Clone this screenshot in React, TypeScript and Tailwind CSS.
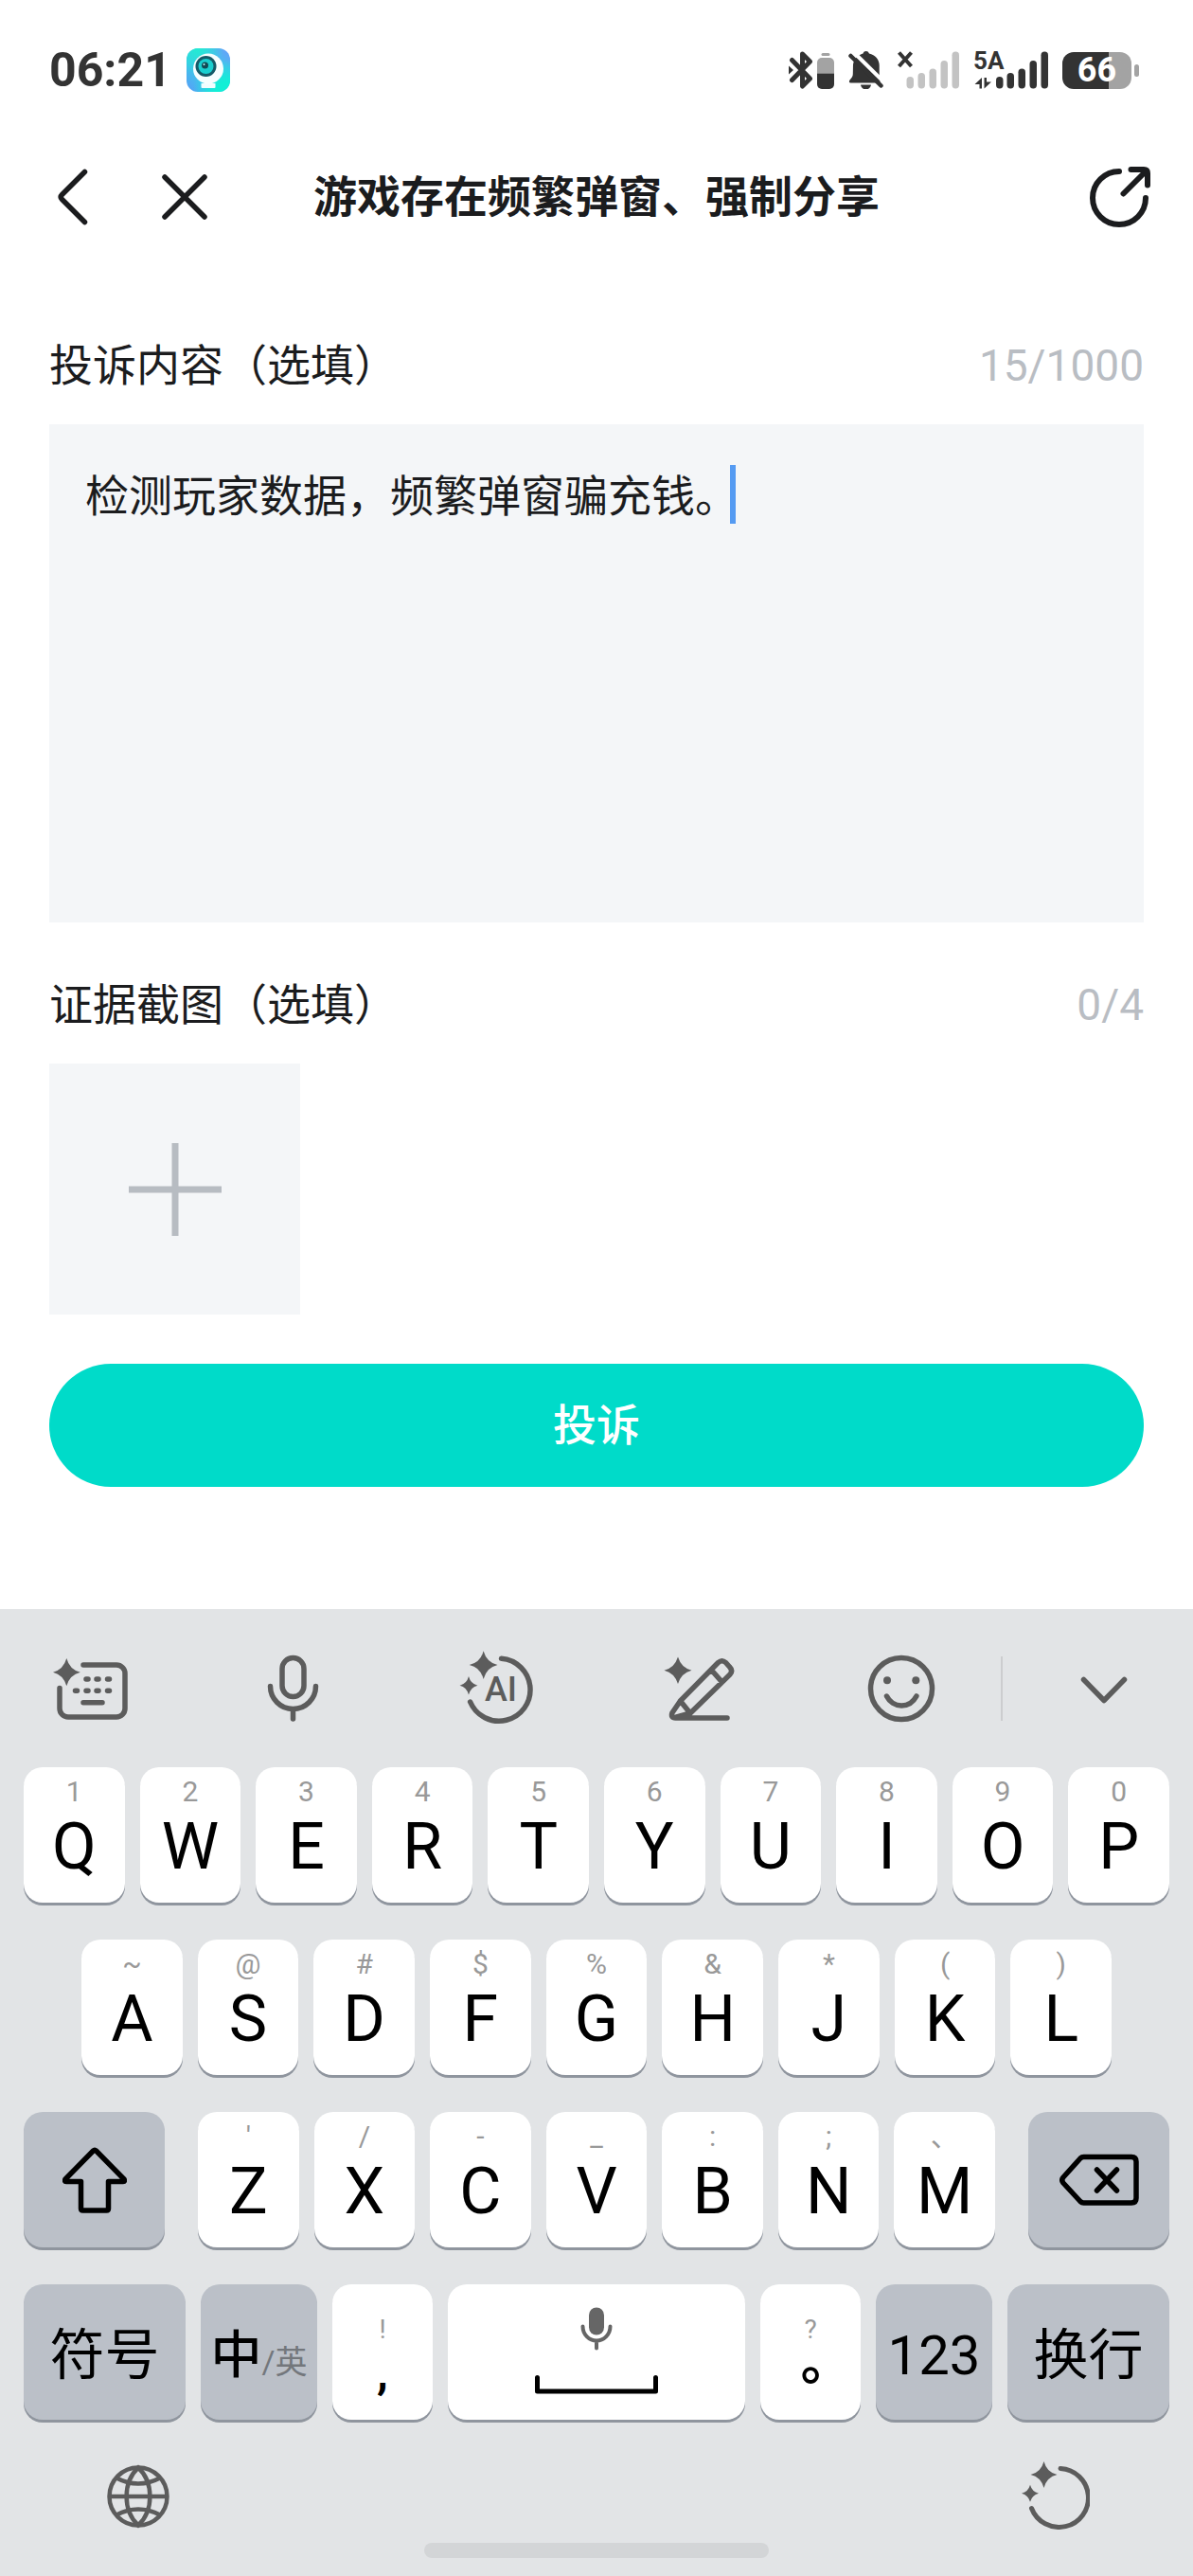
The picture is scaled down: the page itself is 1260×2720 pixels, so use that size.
import React, { useState } from "react";

interface KeyProps {
  label: string;
  hint?: string;
}

interface IconButtonProps {
  title: string;
  children: React.ReactNode;
}

const ROW_ONE: KeyProps[] = [
  { label: "Q", hint: "1" },
  { label: "W", hint: "2" },
  { label: "E", hint: "3" },
  { label: "R", hint: "4" },
  { label: "T", hint: "5" },
  { label: "Y", hint: "6" },
  { label: "U", hint: "7" },
  { label: "I", hint: "8" },
  { label: "O", hint: "9" },
  { label: "P", hint: "0" },
];

const ROW_TWO: KeyProps[] = [
  { label: "A", hint: "~" },
  { label: "S", hint: "@" },
  { label: "D", hint: "#" },
  { label: "F", hint: "$" },
  { label: "G", hint: "%" },
  { label: "H", hint: "&" },
  { label: "J", hint: "*" },
  { label: "K", hint: "(" },
  { label: "L", hint: ")" },
];

const ROW_THREE: KeyProps[] = [
  { label: "Z", hint: "'" },
  { label: "X", hint: "/" },
  { label: "C", hint: "-" },
  { label: "V", hint: "_" },
  { label: "B", hint: ":" },
  { label: "N", hint: ";" },
  { label: "M", hint: "、" },
];

const StatusBar: React.FC = () => {
  return (
    <div className="flex h-[148px] items-center justify-between pl-[52px] pr-[57px] text-[#333]">
      <div className="flex items-center gap-4">
        <span className="text-[50px] font-bold leading-none">06:21</span>
        <svg width="46" height="46" viewBox="0 0 46 46">
          <defs>
            <linearGradient id="cam" x1="0" y1="1" x2="1" y2="0">
              <stop offset="0" stopColor="#5a9cf8" />
              <stop offset="0.35" stopColor="#3fc4ea" />
              <stop offset="0.6" stopColor="#3fc8ea" />
              <stop offset="1" stopColor="#6a9cfb" />
            </linearGradient>
            <radialGradient id="camTop" cx="0.25" cy="0" r="0.6">
              <stop offset="0" stopColor="#22ecd2" />
              <stop offset="1" stopColor="#22ecd2" stopOpacity="0" />
            </radialGradient>
            <radialGradient id="camBottom" cx="0.9" cy="1" r="0.75">
              <stop offset="0.3" stopColor="#12efd6" />
              <stop offset="1" stopColor="#12efd6" stopOpacity="0" />
            </radialGradient>
          </defs>
          <rect width="46" height="46" rx="12" fill="url(#cam)" />
          <rect width="46" height="46" rx="12" fill="url(#camTop)" />
          <rect width="46" height="46" rx="12" fill="url(#camBottom)" />
          <path d="M15.5 37h15v4a1 1 0 0 1-1 1h-13a1 1 0 0 1-1-1z" fill="#f2fdff" />
          <circle cx="23" cy="21.5" r="16" fill="#f7feff" />
          <circle cx="20.5" cy="19" r="11" fill="#155a68" />
          <circle cx="20.5" cy="19" r="8" fill="#19cfd0" />
          <circle cx="19.5" cy="18" r="3.5" fill="#124955" />
          <circle cx="18.5" cy="17" r="1" fill="#bff" />
        </svg>
      </div>

      <div className="flex items-center gap-[15px]">
        {/* bluetooth with headset battery */}
        <svg width="48" height="40" viewBox="0 0 48 40">
          <path
            d="M3.5 9.5 22.5 29 14.5 37V3L22.5 11 3.5 30.5"
            fill="none"
            stroke="#333"
            strokeWidth="5"
            strokeLinecap="round"
            strokeLinejoin="round"
          />
          <path d="M0 15.5 5 20 0 24.5z" fill="#333" />
          <rect x="34.5" y="2" width="9" height="3" rx="1.5" fill="#a3a3a3" />
          <path d="M30 23.5V12a5 5 0 0 1 5-5h8a5 5 0 0 1 5 5v11.5z" fill="#a3a3a3" />
          <path d="M30 23.5V35a5 5 0 0 0 5 5h8a5 5 0 0 0 5-5V23.5z" fill="#333" />
        </svg>
        {/* muted bell */}
        <svg width="37" height="40" viewBox="0 0 37 40">
          <path
            d="M5 14C6 8.500 10 4 15.500 2.500 16 .8 17.300 0 18.700 0s2.700.8 3.200 2.500C28.500 4 32.700 9 32.700 15v12l3 6.500H2.500c-1.800 0-2-1.800-1-3C3.800 28 4.800 26.500 4.800 24z"
            fill="#333"
          />
          <path d="M0 0h11L6 6l-3 6H0zM33.500 24h3.500v11h-3.500z" fill="#fff" />
          <path d="M13 35.500h11c-.5 3-2.700 5-5.500 5s-5-2-5.500-5z" fill="#333" />
          <path d="M7.500 3 38 33" stroke="#fff" strokeWidth="4" />
          <path d="M2.500 5 34.500 36.500" stroke="#333" strokeWidth="4.500" strokeLinecap="round" />
        </svg>
        {/* no service */}
        <svg width="65" height="40" viewBox="0 0 65 40">
          <path d="M1.500 1.500 14.500 16M14.500 1.500 1.500 16" stroke="#333" strokeWidth="4" />
          <g fill="#c3c3c3">
            <rect x="9.500" y="27" width="7.500" height="12.500" rx="3.700" />
            <rect x="21.500" y="23" width="7.500" height="16.500" rx="3.700" />
            <rect x="33.500" y="18.500" width="7.500" height="21" rx="3.700" />
            <rect x="45.500" y="10" width="7.500" height="29.500" rx="3.700" />
            <rect x="57.500" y="0.500" width="7.500" height="39" rx="3.700" />
          </g>
        </svg>
        <svg width="79" height="56" viewBox="0 -8 79 56">
          <text x="0" y="19" fontSize="26" fontWeight="700" fill="#333">
            5A
          </text>
          <g fill="#333">
            <path d="M1.500 35 9 28v11.500H6.500V35z" />
            <path d="M11.500 28H14v4.500h5L11.500 39.500z" />
            <rect x="24" y="27" width="7.500" height="12.500" rx="3.700" />
            <rect x="35.500" y="23" width="7.500" height="16.500" rx="3.700" />
            <rect x="47.500" y="18.500" width="7.500" height="21" rx="3.700" />
            <rect x="59.500" y="10" width="7.500" height="29.500" rx="3.700" />
            <rect x="71.500" y="0.500" width="7.500" height="39" rx="3.700" />
          </g>
        </svg>
        <div className="flex items-center gap-[3px]">
          <div className="flex h-[39px] w-[73px] items-center justify-center rounded-xl bg-linear-to-r from-[#333] from-67% to-[#a3a3a3] to-67% text-[36px] font-bold leading-none text-white">
            66
          </div>
          <div className="h-[13px] w-[5px] rounded-sm bg-[#a3a3a3]" />
        </div>
      </div>
    </div>
  );
};

const NavBar: React.FC = () => {
  return (
    <header className="grid h-[120px] grid-cols-[1fr_auto_1fr] items-center px-[45px] text-[#1b1c1e]">
      <div className="flex items-center gap-[78px] pl-4">
        <button type="button" aria-label="返回">
          <svg width="32" height="60" viewBox="0 0 32 60" fill="none" stroke="currentColor" strokeWidth="5.500" strokeLinecap="round" strokeLinejoin="round">
            <path d="M28.500 3.500 4.500 27.500q-2.500 2.500 0 5l24 24" />
          </svg>
        </button>
        <button type="button" aria-label="关闭">
          <svg width="48" height="48" viewBox="0 0 48 48" fill="none" stroke="currentColor" strokeWidth="5.500" strokeLinecap="round">
            <path d="M3 3 45 45M45 3 3 45" />
          </svg>
        </button>
      </div>
      <h1 className="text-[46px] font-bold leading-[60px]">游戏存在频繁弹窗、强制分享</h1>
      <div className="flex justify-end">
        <button type="button" aria-label="分享">
          <svg width="64" height="64" viewBox="0 0 64 64" fill="none" stroke="currentColor" strokeWidth="6" strokeLinecap="round" strokeLinejoin="round">
            <path d="M31 5A28 28 0 1 0 59 33" />
            <path d="M43.500 3H57q4 0 4 4V19.500M60 4 35.500 28.500" />
          </svg>
        </button>
      </div>
    </header>
  );
};

const ComplaintForm: React.FC = () => {
  const [content, setContent] = useState<string>("检测玩家数据，频繁弹窗骗充钱。");

  return (
    <form className="flex-1 px-[52px] pb-16 pt-[88px] text-[46px] leading-[60px] text-[#1b1c1e]" onSubmit={(e) => e.preventDefault()}>
      <div className="flex justify-between">
        <label htmlFor="content">投诉内容（选填）</label>
        <span className="text-[#b9bdc3]">{content.length}/1000</span>
      </div>
      <div className="relative mt-8">
        <textarea
          id="content"
          maxLength={1000}
          value={content}
          onChange={(e) => setContent(e.target.value)}
          className="block h-[526px] w-full resize-none bg-[#f4f6f8] px-[38px] pt-[46px] caret-[#559bf2] outline-none"
        />
        <span className="pointer-events-none absolute left-[719px] top-[43px] h-[62px] w-[6px] bg-[#559bf2]" />
      </div>

      <div className="mt-[57px] flex justify-between">
        <span>证据截图（选填）</span>
        <span className="text-[#b9bdc3]">0/4</span>
      </div>
      <button type="button" aria-label="添加截图" className="mt-8 flex size-[265px] items-center justify-center bg-[#f4f6f8]">
        <svg width="98" height="98" viewBox="0 0 98 98" stroke="#b7bcc2" strokeWidth="7">
          <path d="M49 0v98M0 49h98" />
        </svg>
      </button>

      <button type="submit" className="mt-[52px] h-[130px] w-full rounded-full bg-[#00dbc9] font-medium text-white">
        投诉
      </button>
    </form>
  );
};

const IconButton: React.FC<IconButtonProps> = ({ title, children }) => {
  return (
    <button type="button" aria-label={title}>
      <svg width="80" height="80" viewBox="0 0 80 80" fill="none" stroke="#5c5c5c" strokeWidth="5.500" strokeLinecap="round" strokeLinejoin="round">
        {children}
      </svg>
    </button>
  );
};

const Toolbar: React.FC = () => {
  return (
    <div className="flex items-center pl-[31px] pr-[29px]">
      <div className="flex flex-1 justify-between">
        <IconButton title="智能键盘">
          <path d="M14.300 8Q17.500 20 28.800 22.700 17.500 25.500 14.300 37.300 11 25.500-.2 22.700 11 20 14.300 8z" fill="#5c5c5c" stroke="none" />
          <path d="M32 15H67a9 9 0 0 1 9 9V61a9 9 0 0 1-9 9H16a9 9 0 0 1-9-9V39.500" />
          <path d="M35 30h2M46 30h2M57.500 30h2M23.500 42.300h2M35 42.300h2M46 42.300h2M57.500 42.300h2M32 54.700H52" />
        </IconButton>
        <IconButton title="语音">
          <rect x="28" y="7.500" width="23" height="41" rx="11.500" />
          <path d="M15.500 37.500A24 24 0 0 0 63.500 37.500M39.500 61.500V72" />
        </IconButton>
        <IconButton title="AI">
          <path d="M26.600.3Q30 12.500 41.500 15 30 17.500 26.600 30 23.500 17.500 11.700 15 23.500 12.500 26.600.3z" fill="#5c5c5c" stroke="none" />
          <path d="M11 27Q13 35 20.500 36.700 13 38.500 11 46.500 9 38.500 1.500 36.700 9 35 11 27z" fill="#5c5c5c" stroke="none" />
          <path d="M45.500 8.300A33 33 0 1 1 12.600 54" />
          <text x="28" y="53" fontSize="36" fontWeight="500" fill="#5c5c5c" stroke="none">
            AI
          </text>
        </IconButton>
        <IconButton title="帮写">
          <path d="M18 6.500Q21.500 18 32.500 20.700 21.500 23.500 18 35 14.500 23.500 3.500 20.700 14.500 18 18 6.500z" fill="#5c5c5c" stroke="none" />
          <path d="M20.500 53 60.500 12.500q4-3.500 8 0l4 4.500q4 4 .500 8L31 66 15 70.500M20.500 53 31 66M53.500 20.500 64 32.500M20.500 53 12 65.500q-2 5.500 3.500 5.500H70" />
        </IconButton>
        <IconButton title="表情">
          <circle cx="40" cy="40" r="32.500" />
          <circle cx="25" cy="31.300" r="4" fill="#5c5c5c" stroke="none" />
          <circle cx="55.300" cy="31.300" r="4" fill="#5c5c5c" stroke="none" />
          <path d="M24.500 48c3 6 9 10 15.700 10s12.500-4 15.700-10" />
        </IconButton>
      </div>
      <div className="ml-[65px] mr-[67px] h-[68px] w-[2px] bg-[#cccdcf]" />
      <IconButton title="收起">
        <path d="M18.500 30.500 40 52.500 61.500 30.500" />
      </IconButton>
    </div>
  );
};

const LetterKey: React.FC<KeyProps> = ({ label, hint }) => {
  return (
    <button type="button" className="flex h-[143px] flex-1 flex-col items-center rounded-[20px] bg-white pt-2 shadow-[0_3px_0_#8f959e]">
      <span className="text-[30px] leading-9 text-[#999]">{hint}</span>
      <span className="text-[68px] leading-[80px] text-black">{label}</span>
    </button>
  );
};

const Keyboard: React.FC = () => {
  return (
    <section className="bg-[#e2e4e6] px-[25px] pt-11 pb-[19px] text-black">
      <Toolbar />

      <div className="mt-[43px] flex flex-col gap-[39px]">
        <div className="flex gap-4">
          {ROW_ONE.map((key) => (
            <LetterKey key={key.label} {...key} />
          ))}
        </div>
        <div className="flex gap-4 px-[61px]">
          {ROW_TWO.map((key) => (
            <LetterKey key={key.label} {...key} />
          ))}
        </div>
        <div className="flex gap-[35px]">
          <button type="button" aria-label="大写" className="flex h-[143px] w-[149px] items-center justify-center rounded-[20px] bg-[#bbc0c8] shadow-[0_3px_0_#8f959e]">
            <svg width="68" height="70" viewBox="0 0 68 70" fill="none" stroke="currentColor" strokeWidth="5.500" strokeLinejoin="round">
              <path d="M32.500 4q1.500-1.500 3 0L65 34q1.500 2.500-1 2.500H48.500V65q0 2-2 2h-25q-2 0-2-2V36.500H4Q1.500 36.500 3 34z" />
            </svg>
          </button>
          <div className="flex flex-1 gap-4">
            {ROW_THREE.map((key) => (
              <LetterKey key={key.label} {...key} />
            ))}
          </div>
          <button type="button" aria-label="删除" className="flex h-[143px] w-[149px] items-center justify-center rounded-[20px] bg-[#bbc0c8] shadow-[0_3px_0_#8f959e]">
            <svg width="84" height="56" viewBox="0 0 84 56" fill="none" stroke="currentColor" strokeWidth="5.500" strokeLinecap="round" strokeLinejoin="round">
              <path d="M25.500 3.500H76q5 0 5 5V47q0 5-5 5H25.500q-2 0-3.500-1.500L4 31q-2.500-3 0-6L22 5q1.500-1.500 3.500-1.500z" />
              <path d="M39.500 17 60.500 39M60.500 17 39.500 39" />
            </svg>
          </button>
        </div>
        <div className="flex gap-4">
          <button type="button" className="h-[143px] w-[171px] rounded-[20px] bg-[#bbc0c8] pt-2 text-[58px] shadow-[0_3px_0_#8f959e]">
            符号
          </button>
          <button type="button" className="flex h-[143px] w-[123px] items-center justify-center rounded-[20px] bg-[#bbc0c8] pt-2 shadow-[0_3px_0_#8f959e]">
            <span className="flex items-baseline">
              <span className="text-[54px] font-medium">中</span>
              <span className="text-[34px] text-[#73777c]">/英</span>
            </span>
          </button>
          <button type="button" className="flex h-[143px] w-[106px] flex-col items-center rounded-[20px] bg-white pt-[30px] shadow-[0_3px_0_#8f959e]">
            <span className="text-[28px] leading-9 text-[#999]">!</span>
            <span className="text-[48px] font-bold leading-[56px]">,</span>
          </button>
          <button type="button" aria-label="空格" className="flex h-[143px] flex-1 flex-col items-center rounded-[20px] bg-white pt-6 shadow-[0_3px_0_#8f959e]">
            <svg width="36" height="46" viewBox="0 0 36 46" fill="none" stroke="#666" strokeWidth="4" strokeLinecap="round">
              <rect x="10" y="0.500" width="16" height="29" rx="8" fill="#666" stroke="none" />
              <path d="M3.500 20.500A14.500 15 0 0 0 32.500 20.500M18 36v7.500" />
            </svg>
            <svg className="mt-[26px]" width="130" height="20" viewBox="0 0 130 20" fill="none" stroke="currentColor" strokeWidth="5" strokeLinecap="round" strokeLinejoin="round">
              <path d="M2.500 2.500V17H127.500V2.500" />
            </svg>
          </button>
          <button type="button" className="flex h-[143px] w-[106px] flex-col items-center rounded-[20px] bg-white pt-[30px] shadow-[0_3px_0_#8f959e]">
            <span className="text-[28px] leading-9 text-[#999]">?</span>
            <span className="font-['Noto_Sans_CJK_TC',sans-serif] text-[54px] font-bold leading-[56px]">。</span>
          </button>
          <button type="button" className="h-[143px] w-[123px] rounded-[20px] bg-[#bbc0c8] pt-2 text-[58px] shadow-[0_3px_0_#8f959e]">
            123
          </button>
          <button type="button" className="h-[143px] w-[171px] rounded-[20px] bg-[#bbc0c8] pt-2 text-[58px] shadow-[0_3px_0_#8f959e]">
            换行
          </button>
        </div>
      </div>

      <div className="mt-11 flex items-center justify-between pl-[88px] pr-[84px]">
        <button type="button" aria-label="切换输入法">
          <svg width="66" height="72" viewBox="0 -4 66 72" fill="none" stroke="#5c5c5c" strokeWidth="4.500">
            <circle cx="33" cy="33" r="30.500" />
            <path d="M33 2.500C16.500 18 16.500 48 33 63.500 49.500 48 49.500 18 33 2.500zM2.500 33h61M10 13.500Q33 25.500 56 13.500M10 52.500Q33 40.500 56 52.500" />
          </svg>
        </button>
        <button type="button" aria-label="智能助手">
          <svg width="72" height="72" viewBox="0 0 72 72" fill="none" stroke="#5c5c5c" strokeWidth="5" strokeLinecap="round">
            <path d="M23.500 0Q26.500 11.500 37.500 14 26.500 16.500 23.500 28 20.500 16.500 9.500 14 20.500 11.500 23.500 0z" fill="#5c5c5c" stroke="none" />
            <path d="M9 24.700Q11 32 18 33.700 11 35.500 9 42.700 7 35.500 0 33.700 7 32 9 24.700z" fill="#5c5c5c" stroke="none" />
            <path d="M41 7.500A31 31 0 1 1 10.500 49.500" />
          </svg>
        </button>
      </div>
      <div className="mx-auto mt-[14px] h-4 w-[364px] rounded-full bg-[#d3d5d7]" />
    </section>
  );
};

const App: React.FC = () => {
  return (
    <div className="flex min-h-screen flex-col bg-white font-['Roboto','Noto_Sans_CJK_SC',sans-serif]">
      <StatusBar />
      <NavBar />
      <ComplaintForm />
      <Keyboard />
    </div>
  );
};

export default App;
